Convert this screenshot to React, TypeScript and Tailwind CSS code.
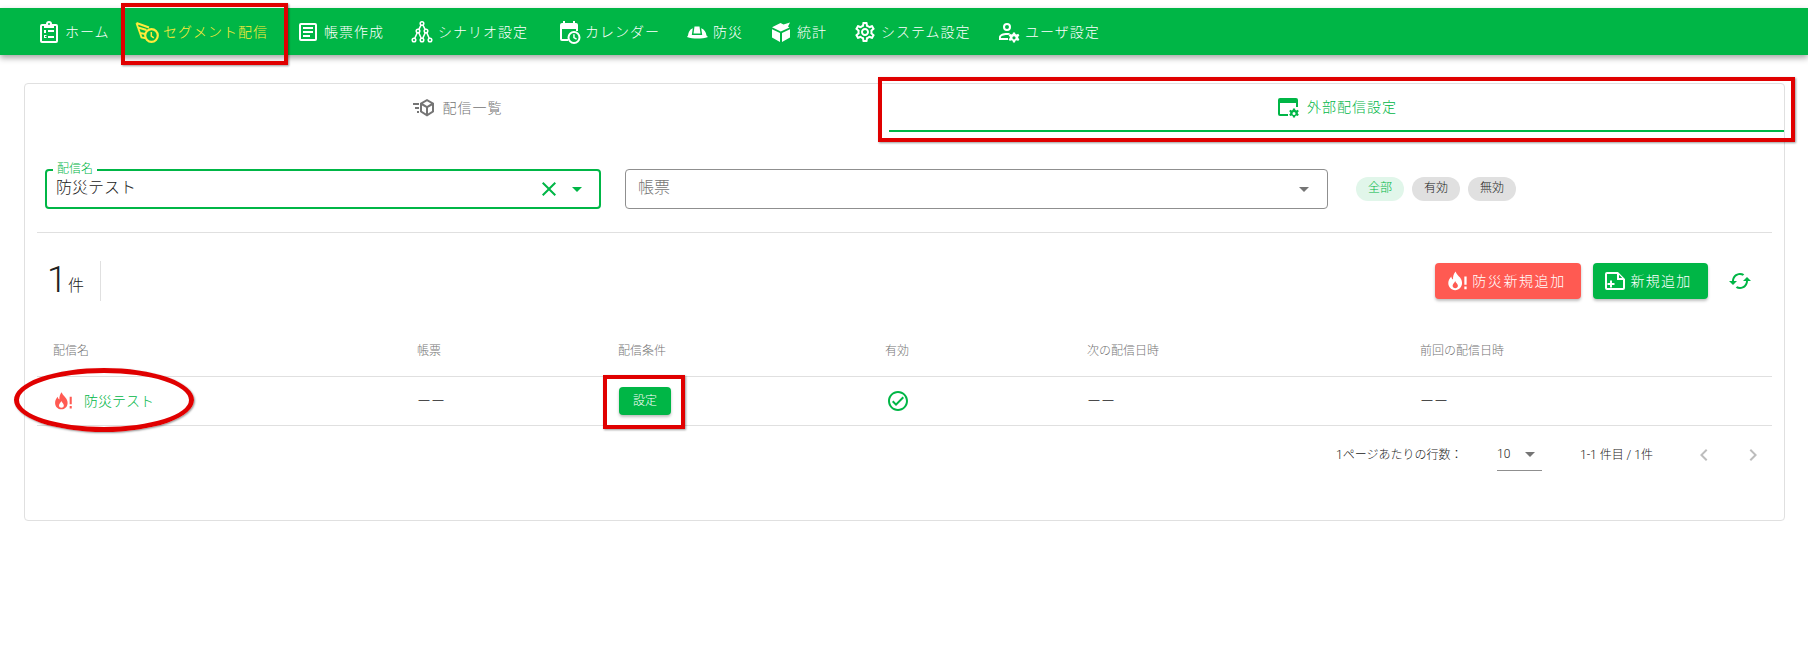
import type { ReactNode } from "react";
import {
  MdArrowDropDown,
  MdChevronLeft,
  MdChevronRight,
  MdClose,
  MdOutlineCheckCircle,
  MdOutlineSettings,
  MdSync,
} from "react-icons/md";

function Svg({ children, className }: { children: ReactNode; className?: string }) {
  return (
    <svg viewBox="0 0 24 24" fill="currentColor" className={className} aria-hidden="true">
      {children}
    </svg>
  );
}

function HomeIcon() {
  return (
    <Svg className="h-6 w-6">
      <path d="M5 4h4a3 3 0 0 1 6 0h4a2 2 0 0 1 2 2v15a2 2 0 0 1-2 2H5a2 2 0 0 1-2-2V6a2 2 0 0 1 2-2Zm0 2v15h14V6h-2v2H7V6H5Zm7-3a1 1 0 1 0 0 2 1 1 0 0 0 0-2Z" />
      <path d="M11 10h6v2h-6zM11 16h6v2h-6zM7 10h2v3H7zM7 15h2.500v1H8v1h1.500v1H7z" />
    </Svg>
  );
}

function SegmentIcon() {
  return (
    <svg viewBox="0 0 24 24" fill="none" stroke="currentColor" className="h-6 w-6" aria-hidden="true">
      <path d="M1.500 3 14 7.500M1.500 3l1.500 4.500 8.500 2.500M3 7.500 5 13l5 1M5 13l1.500 4.500 4.500.8" strokeWidth="1.900" />
      <circle cx="16.500" cy="15.500" r="6.300" strokeWidth="2.200" />
      <path d="M16.300 12v4l2.500 1.800" strokeWidth="1.500" />
    </svg>
  );
}

function ReportIcon() {
  return (
    <Svg className="h-6 w-6">
      <path d="M5 3h14a2 2 0 0 1 2 2v14a2 2 0 0 1-2 2H5a2 2 0 0 1-2-2V5a2 2 0 0 1 2-2Zm0 2v14h14V5H5Z" />
      <path d="M7 7h10v2H7zM7 11h10v2H7zM7 15h7v2H7z" />
    </Svg>
  );
}

function ScenarioIcon() {
  return (
    <svg viewBox="0 0 24 24" fill="none" stroke="currentColor" strokeWidth="1.500" className="h-6 w-6" aria-hidden="true">
      <circle cx="12" cy="3.500" r="1.800" />
      <circle cx="8" cy="11" r="1.800" />
      <circle cx="16" cy="11" r="1.800" />
      <circle cx="4" cy="20" r="1.800" />
      <circle cx="12" cy="20" r="1.800" />
      <circle cx="20" cy="20" r="1.800" />
      <path d="M11 5.200 8.900 9.400M13 5.200l2.100 4.200M7.200 12.700 4.800 18.300M8.800 12.700l2.400 5.600M15.200 12.700l-2.400 5.600M16.800 12.700l2.400 5.600" />
    </svg>
  );
}

function CalendarIcon() {
  return (
    <Svg className="h-6 w-6">
      <path d="M6 1h2v2h8V1h2v2h1a2 2 0 0 1 2 2v6h-2V9H5v10h6v2H5a2 2 0 0 1-2-2V5a2 2 0 0 1 2-2h1V1Z" />
      <path fillRule="evenodd" d="M17 11a6.500 6.500 0 1 1 0 13 6.500 6.500 0 0 1 0-13Zm0 2a4.500 4.500 0 1 0 0 9 4.500 4.500 0 0 0 0-9Zm-.8 1.200h1.500v3l2.200 1.300-.7 1.200-3-1.800Z" />
    </Svg>
  );
}

function HelmetIcon() {
  return (
    <Svg className="h-6 w-6">
      <path d="M9.500 6.500h5l1 7h-7l1-7ZM7.800 8.200 6.800 15h10.400l-1-6.800c3 1 4.800 3.800 5.300 7.300l1.500 1.500c-3 1-6.800 1.500-10.500 1.500s-7.500-.5-10.500-1.500L3 15.500c.5-3.500 1.800-6.300 4.800-7.300Z" />
    </Svg>
  );
}

function CubeIcon() {
  return (
    <Svg className="h-6 w-6">
      <path d="M11.800 11.500 3 7.300 11.500 3 14.500 4.500 21 2.500l-2 4 1.500 1-8.700 4ZM3 9.200l8 3.800V22l-8-4.500V9.200ZM21 9.200V17.500L13 22v-9l8-3.800Z" />
    </Svg>
  );
}

function UserCogIcon() {
  return (
    <Svg className="h-6 w-6">
      <path fillRule="evenodd" d="M10 3a4 4 0 1 1 0 8 4 4 0 0 1 0-8Zm0 2a2 2 0 1 0 0 4 2 2 0 0 0 0-4ZM10 13c1 0 2 .1 3 .3l-1.500 1.800c-4-.4-7.600.9-7.600 2.100V18H11v2H2v-2.800C2 14.500 6 13 10 13Z" />
      <path fillRule="evenodd" d="m18 12.500.4 1.600 1.300.5 1.500-.8 1.200 1.700-1.200 1.200v1.400l1.200 1.200-1.200 1.700-1.500-.8-1.300.5-.4 1.800h-2l-.4-1.800-1.300-.5-1.500.8-1.200-1.700 1.200-1.200v-1.400l-1.200-1.200 1.200-1.700 1.500.8 1.300-.5.400-1.600h2Zm-1 3.700a1.600 1.600 0 1 0 0 3.200 1.600 1.600 0 0 0 0-3.200Z" />
    </Svg>
  );
}

function CubeSendIcon() {
  return (
    <Svg className="h-6 w-6">
      <path fillRule="evenodd" d="m15 3 7 4v9l-7 4.500L8 16V7l7-4Zm0 2.300L11 7.600l4 2.300 4-2.300-4-2.300ZM10 9.400v5.500l4 2.500v-5.700l-4-2.300Zm10 0-4 2.300v5.700l4-2.500V9.400Z" />
      <path d="M1 7h6v2H1zM3 11h4v2H3zM5 15h2v2H5z" />
    </Svg>
  );
}

function AppCogIcon() {
  return (
    <Svg className="h-6 w-6">
      <path d="M4 3h16a2 2 0 0 1 2 2v7h-2V8H4v11h8v2H4a2 2 0 0 1-2-2V5a2 2 0 0 1 2-2Z" />
      <path fillRule="evenodd" d="m19 13.500.3 1.400 1.200.5 1.300-.7 1 1.500-1 1.100v1.200l1 1.100-1 1.500-1.300-.7-1.200.5-.3 1.600h-2l-.3-1.600-1.200-.5-1.300.7-1-1.500 1-1.100v-1.200l-1-1.100 1-1.500 1.300.7 1.200-.5.300-1.400h2Zm-1 3.500a1.500 1.500 0 1 0 0 3 1.500 1.500 0 0 0 0-3Z" />
    </Svg>
  );
}

function FireAlertIcon({ className }: { className?: string }) {
  return (
    <Svg className={className}>
      <path
        fillRule="evenodd"
        d="M10.500 1.500c.8 3 3 4.500 4.800 6.800 1.300 1.700 2.200 3.700 2.200 6 0 4.400-3.300 7.700-7.500 7.700s-7.500-3.300-7.500-7.700c0-3 1.400-5.400 3.300-7.300.1 1.500.7 2.700 1.900 3.300-.3-3.200.6-6.400 2.800-8.800ZM10 12c-.4 1.800-2.800 3-2.800 5.300 0 1.600 1.300 2.700 2.900 2.700s2.900-1.100 2.900-2.700c0-2.300-2.600-3.300-3-5.300Z"
      />
      <path d="M20 7h2.500v9H20zM20 18h2.500v3H20z" />
    </Svg>
  );
}

function NotePlusIcon() {
  return (
    <Svg className="h-6 w-6">
      <path fillRule="evenodd" d="M4 3h11l7 7v9a2 2 0 0 1-2 2H4a2 2 0 0 1-2-2V5a2 2 0 0 1 2-2Zm0 2v14h16v-8h-6V5H4Zm12 .8V9h3.200L16 5.800Z" />
      <path d="M7 11.500h2V14h2.500v2H9v2.500H7V16H4.500v-2H7z" />
    </Svg>
  );
}

const navItems: { label: string; icon: ReactNode; active?: boolean; width: string }[] = [
  { label: "ホーム", icon: <HomeIcon />, width: "w-[98px]" },
  { label: "セグメント配信", icon: <SegmentIcon />, active: true, width: "w-[161px]" },
  { label: "帳票作成", icon: <ReportIcon />, width: "w-[114px]" },
  { label: "シナリオ設定", icon: <ScenarioIcon />, width: "w-[147px]" },
  { label: "カレンダー", icon: <CalendarIcon />, width: "w-[128px]" },
  { label: "防災", icon: <HelmetIcon />, width: "w-[84px]" },
  { label: "統計", icon: <CubeIcon />, width: "w-[84px]" },
  { label: "システム設定", icon: <MdOutlineSettings className="h-6 w-6" />, width: "w-[144px]" },
  { label: "ユーザ設定", icon: <UserCogIcon />, width: "w-[110px]" },
];

const columns = [
  { label: "配信名", width: "w-[364px]" },
  { label: "帳票", width: "w-[201px]" },
  { label: "配信条件", width: "w-[267px]" },
  { label: "有効", width: "w-[202px]" },
  { label: "次の配信日時", width: "w-[333px]" },
  { label: "前回の配信日時", width: "w-[368px]" },
];

export default function App() {
  return (
    <div className="relative h-[661px] overflow-hidden bg-white pt-2 font-['Roboto','Noto_Sans_CJK_JP',sans-serif] font-light text-[#212121]">
      <nav className="flex h-[47px] items-center bg-[#00b646] pl-[37px] text-white shadow-[0_3px_6px_rgba(0,0,0,0.35)]">
        {navItems.map((item) => (
          <div
            key={item.label}
            className={`flex shrink-0 items-center gap-1 ${item.width} ${item.active ? "text-[#ffeb3b]" : ""}`}
          >
            {item.icon}
            <span className="text-sm tracking-[1px] whitespace-nowrap">{item.label}</span>
          </div>
        ))}
      </nav>

      <main className="mt-7 mr-[23px] ml-6 h-[438px] rounded border border-[#e0e0e0] bg-white">
        <div className="flex h-[48px]">
          <div className="flex w-[864px] items-center justify-center gap-[7px] text-sm tracking-[1px] text-[#757575]">
            <CubeSendIcon />
            配信一覧
          </div>
          <div className="flex flex-1 items-center justify-center gap-[7px] border-b-2 border-[#00b646] text-sm tracking-[1px] text-[#00b646]">
            <AppCogIcon />
            外部配信設定
          </div>
        </div>

        <div className="mx-3 mt-[37px] flex h-[64px] w-[1735px] items-start border-b border-[#e0e0e0] pl-2">
          <div className="relative flex h-10 w-[556px] items-center rounded border-2 border-[#00b646] pr-[10px] pl-[9px]">
            <span className="absolute -top-[9px] left-[6px] bg-white px-1 text-xs leading-[14px] text-[#00b646]">配信名</span>
            <span className="flex-1 pb-[3px] text-base">防災テスト</span>
            <MdClose className="h-6 w-6 text-[#00b646]" />
            <MdArrowDropDown className="ml-1 h-6 w-6 text-[#00b646]" />
          </div>
          <div className="ml-6 flex h-10 w-[703px] items-center rounded border border-[#8f8f8f] pr-[11px] pl-3">
            <span className="flex-1 pb-[3px] text-base text-[#757575]">帳票</span>
            <MdArrowDropDown className="h-6 w-6 text-[#757575]" />
          </div>
          <div className="mt-2 ml-7 flex gap-2 text-xs">
            <span className="flex h-6 w-12 items-center justify-center rounded-full bg-[#e1f6ea] pb-[2px] text-[#00b646]">全部</span>
            <span className="flex h-6 w-12 items-center justify-center rounded-full bg-[#e0e0e0] pb-[2px]">有効</span>
            <span className="flex h-6 w-12 items-center justify-center rounded-full bg-[#e0e0e0] pb-[2px]">無効</span>
          </div>
        </div>

        <div className="mx-3 mt-7 flex h-10 w-[1735px] items-center">
          <div className="flex h-10 w-[64px] items-end border-r border-[#e0e0e0] pb-[1px] pl-[10px]">
            <span className="text-[36px] leading-10 font-light">1</span>
            <span className="mb-[2px] ml-[1px] text-base">件</span>
          </div>
          <div className="ml-auto flex items-center">
            <button className="flex h-9 w-[146px] items-center justify-center gap-1 rounded bg-[#ff5a52] pr-[4px] text-sm tracking-[1.6px] text-white shadow-[0_2px_3px_rgba(0,0,0,0.25)]">
              <FireAlertIcon className="h-[22px] w-[22px]" />
              防災新規追加
            </button>
            <button className="ml-3 flex h-9 w-[115px] items-center justify-center gap-[3px] rounded bg-[#00b646] pr-[6px] text-sm tracking-[1.3px] text-white shadow-[0_2px_3px_rgba(0,0,0,0.25)]">
              <NotePlusIcon />
              新規追加
            </button>
            <MdSync className="mr-[20px] ml-5 h-6 w-6 rotate-90 text-[#00b646]" />
          </div>
        </div>

        <table className="mx-3 mt-[25px] w-[1735px] table-fixed border-collapse text-left">
          <thead>
            <tr className="h-[50px] border-b border-[#e0e0e0] text-xs text-[#757575]">
              {columns.map((col) => (
                <th key={col.label} className={`${col.width} pl-4 font-light`}>
                  {col.label}
                </th>
              ))}
            </tr>
          </thead>
          <tbody>
            <tr className="h-[49px] border-b border-[#e0e0e0] text-sm">
              <td className="pl-4">
                <div className="flex items-center gap-[11px] text-[#00b646]">
                  <FireAlertIcon className="h-5 w-5 text-[#ff5a52]" />
                  <span className="text-sm">防災テスト</span>
                </div>
              </td>
              <td className="pl-4">ーー</td>
              <td className="pl-[17px]">
                <button className="h-7 w-[52px] rounded bg-[#00b646] text-xs text-white shadow-[0_2px_3px_rgba(0,0,0,0.25)]">設定</button>
              </td>
              <td className="pl-[17px]">
                <MdOutlineCheckCircle className="h-6 w-6 text-[#00b646]" />
              </td>
              <td className="pl-4">ーー</td>
              <td className="pl-4">ーー</td>
            </tr>
          </tbody>
        </table>

        <div className="mx-3 mt-[11px] flex h-[36px] w-[1735px] items-center text-xs">
          <span className="ml-[1299px] w-[161px] whitespace-nowrap">1ページあたりの行数：</span>
          <div className="flex h-8 w-[45px] items-center justify-between border-b border-[#8f8f8f] text-xs">
            <span>10</span>
            <MdArrowDropDown className="h-6 w-6 text-[#757575]" />
          </div>
          <span className="ml-[38px] w-[73px] whitespace-nowrap">1-1 件目 / 1件</span>
          <MdChevronLeft className="ml-[39px] h-6 w-6 text-[#bdbdbd]" />
          <MdChevronRight className="ml-[25px] h-6 w-6 text-[#bdbdbd]" />
        </div>
      </main>

      {/* red annotations drawn on top of the screenshot */}
      <div className="absolute top-[3px] left-[121px] h-[62px] w-[167px] border-[4px] border-[#e00000] shadow-[1px_1px_2px_rgba(0,0,0,0.4)]" />
      <div className="absolute top-[77px] left-[878px] h-[65px] w-[917px] border-[4px] border-[#e00000] shadow-[1px_1px_2px_rgba(0,0,0,0.4)]" />
      <div className="absolute top-[375px] left-[603px] h-[54px] w-[82px] border-[4px] border-[#e00000] shadow-[1px_1px_2px_rgba(0,0,0,0.4)]" />
      <div className="absolute top-[368px] left-[14px] h-[64px] w-[180px] rounded-[50%] border-[5px] border-[#e00000] shadow-[1px_1px_2px_rgba(0,0,0,0.4)]" />
    </div>
  );
}
